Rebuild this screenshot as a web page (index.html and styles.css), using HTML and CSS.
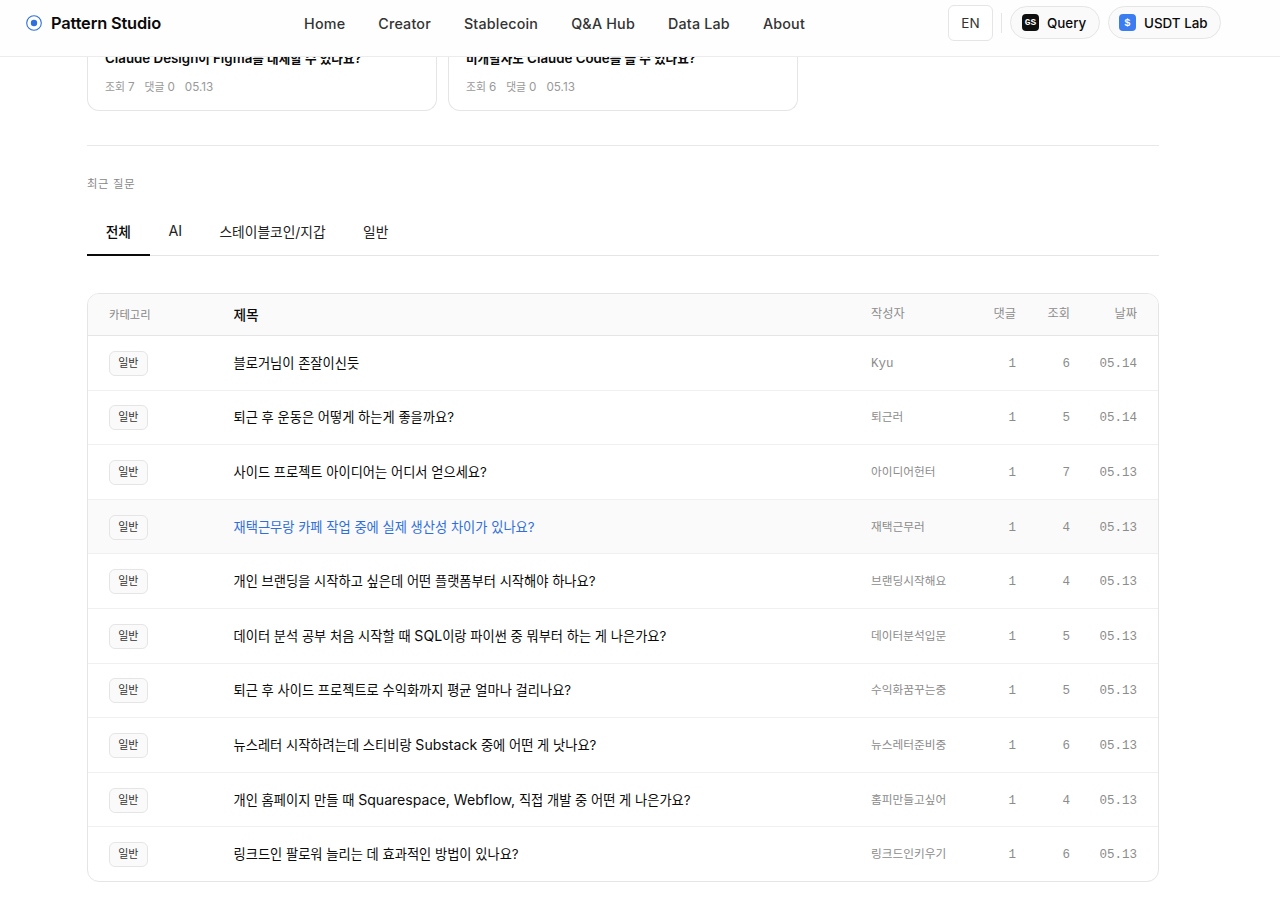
FILE: index.html
```html
<!DOCTYPE html>
<html lang="ko">
<head>
    <meta charset="UTF-8">
    <meta name="viewport" content="width=device-width, initial-scale=1.0">
    <title>Pattern Studio</title>
    <link rel="stylesheet" href="styles.css">
</head>
<body>
    <!-- Header -->
    <header class="header">
        <a class="brand" href="#">
            <svg class="brand-icon" viewBox="0 0 16 16" width="16" height="16">
                <circle cx="8" cy="8" r="7.3" fill="none" stroke="#2f6fdb" stroke-width="1.1"/>
                <circle cx="8" cy="8" r="3.2" fill="#2f6fdb"/>
            </svg>
            <span class="brand-name">Pattern Studio</span>
        </a>
        <nav class="nav">
            <a href="#">Home</a>
            <a href="#">Creator</a>
            <a href="#">Stablecoin</a>
            <a href="#">Q&amp;A Hub</a>
            <a href="#">Data Lab</a>
            <a href="#">About</a>
        </nav>
        <div class="actions">
            <button class="lang">EN</button>
            <span class="divider"></span>
            <a class="pill pill-query" href="#"><span class="pill-icon">GS</span>Query</a>
            <a class="pill pill-usdt" href="#"><span class="pill-icon blue">$</span>USDT Lab</a>
        </div>
    </header>

    <main class="container">
        <!-- Question cards -->
        <section class="cards">
            <article class="card">
                <h3><span class="en">Claude Design</span>이 <span class="en">Figma</span>를 대체할 수 있나요?</h3>
                <p class="meta"><span>조회 <b>7</b></span><span>댓글 <b>0</b></span><b>05.13</b></p>
            </article>
            <article class="card">
                <h3>비개발자도 <span class="en">Claude Code</span>를 쓸 수 있나요?</h3>
                <p class="meta"><span>조회 <b>6</b></span><span>댓글 <b>0</b></span><b>05.13</b></p>
            </article>
        </section>

        <!-- Recent questions -->
        <section class="recent">
            <h2 class="label">최근 질문</h2>
            <div class="tabs">
                <button class="tab active">전체</button>
                <button class="tab"><span class="en">AI</span></button>
                <button class="tab">스테이블코인/지갑</button>
                <button class="tab">일반</button>
            </div>

            <div class="board">
                <div class="row head">
                    <span class="cat">카테고리</span>
                    <span class="title">제목</span>
                    <span class="author">작성자</span>
                    <span class="num">댓글</span>
                    <span class="num">조회</span>
                    <span class="num">날짜</span>
                </div>
                <div class="row">
                    <span><span class="badge">일반</span></span>
                    <a class="title" href="#">블로거님이 존잘이신듯</a>
                    <span class="author mono">Kyu</span>
                    <span class="num mono">1</span>
                    <span class="num mono">6</span>
                    <span class="num mono">05.14</span>
                </div>
                <div class="row">
                    <span><span class="badge">일반</span></span>
                    <a class="title" href="#">퇴근 후 운동은 어떻게 하는게 좋을까요?</a>
                    <span class="author">퇴근러</span>
                    <span class="num mono">1</span>
                    <span class="num mono">5</span>
                    <span class="num mono">05.14</span>
                </div>
                <div class="row">
                    <span><span class="badge">일반</span></span>
                    <a class="title" href="#">사이드 프로젝트 아이디어는 어디서 얻으세요?</a>
                    <span class="author">아이디어헌터</span>
                    <span class="num mono">1</span>
                    <span class="num mono">7</span>
                    <span class="num mono">05.13</span>
                </div>
                <div class="row hovered">
                    <span><span class="badge">일반</span></span>
                    <a class="title" href="#">재택근무랑 카페 작업 중에 실제 생산성 차이가 있나요?</a>
                    <span class="author">재택근무러</span>
                    <span class="num mono">1</span>
                    <span class="num mono">4</span>
                    <span class="num mono">05.13</span>
                </div>
                <div class="row">
                    <span><span class="badge">일반</span></span>
                    <a class="title" href="#">개인 브랜딩을 시작하고 싶은데 어떤 플랫폼부터 시작해야 하나요?</a>
                    <span class="author">브랜딩시작해요</span>
                    <span class="num mono">1</span>
                    <span class="num mono">4</span>
                    <span class="num mono">05.13</span>
                </div>
                <div class="row">
                    <span><span class="badge">일반</span></span>
                    <a class="title" href="#">데이터 분석 공부 처음 시작할 때 <span class="en">SQL</span>이랑 파이썬 중 뭐부터 하는 게 나은가요?</a>
                    <span class="author">데이터분석입문</span>
                    <span class="num mono">1</span>
                    <span class="num mono">5</span>
                    <span class="num mono">05.13</span>
                </div>
                <div class="row">
                    <span><span class="badge">일반</span></span>
                    <a class="title" href="#">퇴근 후 사이드 프로젝트로 수익화까지 평균 얼마나 걸리나요?</a>
                    <span class="author">수익화꿈꾸는중</span>
                    <span class="num mono">1</span>
                    <span class="num mono">5</span>
                    <span class="num mono">05.13</span>
                </div>
                <div class="row">
                    <span><span class="badge">일반</span></span>
                    <a class="title" href="#">뉴스레터 시작하려는데 스티비랑 <span class="en">Substack</span> 중에 어떤 게 낫나요?</a>
                    <span class="author">뉴스레터준비중</span>
                    <span class="num mono">1</span>
                    <span class="num mono">6</span>
                    <span class="num mono">05.13</span>
                </div>
                <div class="row">
                    <span><span class="badge">일반</span></span>
                    <a class="title" href="#">개인 홈페이지 만들 때 <span class="en">Squarespace, Webflow,</span> 직접 개발 중 어떤 게 나은가요?</a>
                    <span class="author">홈피만들고싶어</span>
                    <span class="num mono">1</span>
                    <span class="num mono">4</span>
                    <span class="num mono">05.13</span>
                </div>
                <div class="row">
                    <span><span class="badge">일반</span></span>
                    <a class="title" href="#">링크드인 팔로워 늘리는 데 효과적인 방법이 있나요?</a>
                    <span class="author">링크드인키우기</span>
                    <span class="num mono">1</span>
                    <span class="num mono">6</span>
                    <span class="num mono">05.13</span>
                </div>
            </div>
        </section>
    </main>
</body>
</html>
```
FILE: styles.css
```css
/* General Reset */
* {
    box-sizing: border-box;
    margin: 0;
    padding: 0;
}
body {
    font-family: Inter, "Noto Sans CJK KR", sans-serif;
    font-size: 13px;
    background-color: #fff;
    color: #0a0a0a;
    height: 908px;
    overflow: hidden;
}
a {
    color: inherit;
    text-decoration: none;
}
button {
    font-family: inherit;
    background: none;
    border: none;
}
/* Header */
.header {
    position: fixed;
    top: 0;
    left: 0;
    right: 0;
    z-index: 10;
    height: 57px;
    padding: 0 59px 11px 26px;
    display: flex;
    align-items: center;
    justify-content: space-between;
    background: #fefefe;
    border-bottom: 1px solid #ececec;
}
.brand {
    display: flex;
    align-items: center;
    gap: 9px;
}
.brand-name {
    font-size: 16.4px;
    font-weight: 600;
    letter-spacing: -0.16px;
}
.nav {
    display: flex;
    gap: 33px;
    padding-top: 1px;
    font-size: 14.3px;
    font-weight: 450;
    letter-spacing: 0.2px;
    color: #333;
}
.actions {
    display: flex;
    align-items: center;
}
.lang {
    width: 45px;
    height: 36px;
    border: 1px solid #e5e5e5;
    border-radius: 6px;
    background: #fff;
    font-size: 13.5px;
    color: #333;
}
.divider {
    width: 1px;
    height: 20px;
    margin: 0 8px;
    background: #e5e5e5;
}
.pill {
    display: flex;
    align-items: center;
    gap: 8px;
    height: 33px;
    padding: 0 11px;
    border: 1px solid #e5e5e5;
    border-radius: 17px;
    background: #fafafa;
    font-size: 13.4px;
    font-weight: 500;
    white-space: nowrap;
}
.pill-query {
    width: 90px;
    margin-right: 8px;
}
.pill-usdt {
    width: 113px;
    padding: 0 10px;
}
.pill-icon {
    width: 17px;
    height: 17px;
    border-radius: 4px;
    background: #0f0f0f;
    color: #fff;
    font-family: "Liberation Mono", monospace;
    font-size: 9.5px;
    font-weight: 700;
    line-height: 18px;
    text-align: center;
    flex-shrink: 0;
}
.pill-icon.blue {
    background: #3b7cf0;
    font-size: 10.5px;
}
/* Cards */
.container {
    width: 1072px;
    margin-left: 87px;
}
.cards {
    display: grid;
    grid-template-columns: repeat(3, 1fr);
    gap: 11px;
    padding-bottom: 34px;
    border-bottom: 1px solid #e8e8e8;
}
.card {
    height: 111px;
    padding: 48px 17px 0;
    border: 1px solid #e5e5e5;
    border-top: none;
    border-radius: 0 0 12px 12px;
}
.card h3 {
    font-size: 12.6px;
    font-weight: 600;
    line-height: 20px;
    white-space: nowrap;
}
.card .en {
    font-size: 13.3px;
}
.meta {
    display: flex;
    gap: 10px;
    margin-top: 8px;
    font-size: 10.8px;
    line-height: 20px;
    color: #999;
}
.meta b {
    font-size: 11.7px;
    font-weight: 400;
}
/* Recent questions */
.label {
    margin-top: 28px;
    font-size: 11.3px;
    font-weight: 400;
    line-height: 20px;
    letter-spacing: 0.7px;
    color: #888;
}
.tabs {
    display: flex;
    height: 62px;
    border-bottom: 1px solid #e5e5e5;
}
.tab {
    height: 62px;
    padding: 13px 18.7px 0;
    font-size: 13.75px;
    color: #222;
    border-bottom: 2px solid transparent;
}
.tab .en {
    font-size: 14.3px;
}
.tab.active {
    font-weight: 500;
    color: #0a0a0a;
    border-bottom-color: #0a0a0a;
}
/* Board */
.board {
    margin-top: 37px;
    border: 1px solid #e5e5e5;
    border-radius: 12px;
    overflow: hidden;
}
.row {
    display: grid;
    grid-template-columns: 124.5px 1fr 90px 55px 54px 67px;
    align-items: center;
    height: 54.6px;
    padding: 0 21px;
    border-bottom: 1px solid #f0f0f0;
    line-height: 20px;
}
.row:last-child {
    height: 53.6px;
    border-bottom: none;
}
.row.head {
    height: 42px;
    background: #fafafa;
    border-bottom-color: #e5e5e5;
    font-size: 12.2px;
    color: #888;
}
.row.hovered {
    background: #fafafa;
}
.row.hovered .title {
    color: #2f6fdb;
}
.cat {
    font-size: 11.3px;
}
.title {
    font-size: 13.25px;
    color: #0a0a0a;
    white-space: nowrap;
}
.head .title {
    font-size: 13.7px;
    font-weight: 500;
}
.title .en {
    font-size: 14.1px;
}
.author {
    font-size: 11.7px;
    color: #8c8c8c;
}
.head .author,
.head .num {
    font-size: 12.2px;
    padding-bottom: 2px;
}
.num {
    text-align: right;
    color: #8c8c8c;
}
.mono {
    font-family: "Liberation Mono", monospace;
    font-size: 12.5px;
    padding-top: 2px;
}
.badge {
    display: inline-block;
    width: 38.5px;
    height: 25px;
    margin-top: 1px;
    border: 1px solid #e5e5e5;
    border-radius: 6px;
    background: #fafafa;
    font-size: 11px;
    line-height: 22px;
    text-align: center;
    color: #333;
    vertical-align: middle;
}
```
